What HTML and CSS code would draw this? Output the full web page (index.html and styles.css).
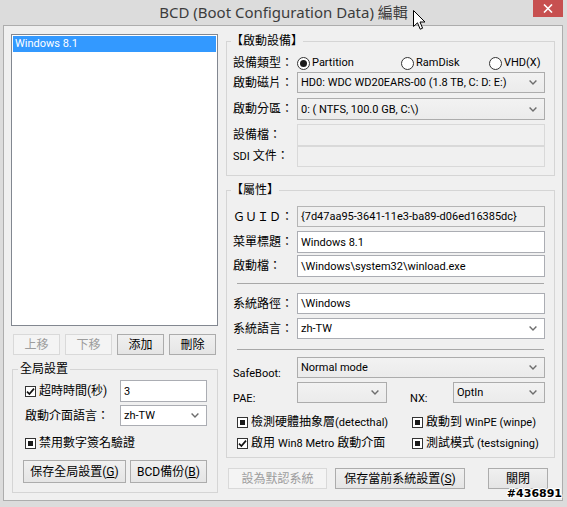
FILE: index.html
```html
<!DOCTYPE html>
<html lang="zh-Hant">
<head>
<meta charset="utf-8">
<title>BCD 編輯</title>
<link rel="stylesheet" href="styles.css">
</head>
<body>
<div class="window">
  <div class="titlebar">
    <div class="title">BCD (Boot Configuration Data) 編輯</div>
    <div class="close"><svg width="10" height="9" viewBox="0 0 10 9"><path d="M1 0.5L9 8.5M9 0.5L1 8.5" stroke="#fff" stroke-width="1.6"/></svg></div>
    <svg class="cursor" width="13" height="20" viewBox="0 0 13 20"><path d="M0.5 0.5 V16.5 L4.5 12.8 L7.2 19.2 L9.6 18.2 L7 12 H12 Z" fill="#fff" stroke="#000" stroke-width="1" stroke-linejoin="round"/></svg>
  </div>
  <div class="client">
    <div class="leftcol">
      <div class="listbox"><div class="item sel">Windows 8.1</div></div>
      <div class="listbtns">
        <div class="btn dis">上移</div>
        <div class="btn dis">下移</div>
        <div class="btn">添加</div>
        <div class="btn">刪除</div>
      </div>
      <fieldset class="group gglobal">
        <legend>全局設置</legend>
        <div class="grow r1">
          <div class="check"><span class="cb"><svg width="9" height="9" viewBox="0 0 9 9"><path d="M1 4.6 L3.4 7 L8 1.6" fill="none" stroke="#111" stroke-width="1.7"/></svg></span><span>超時時間(秒)</span></div>
          <div class="tb w87">3</div>
        </div>
        <div class="grow r2">
          <div class="plain">啟動介面語言：</div>
          <div class="tb combo w87">zh-TW<svg class="chev" width="8" height="5" viewBox="0 0 8 5"><path d="M0.6 0.6 L4 4 L7.4 0.6" fill="none" stroke="#6d6d6d" stroke-width="1.4"/></svg></div>
        </div>
        <div class="grow r3">
          <div class="check"><span class="cb ind"></span><span>禁用數字簽名驗證</span></div>
        </div>
        <div class="grow r4">
          <div class="btn gb1"><span>保存全局設置(<u>G</u>)</span></div>
          <div class="btn gb2"><span>BCD備份(<u>B</u>)</span></div>
        </div>
      </fieldset>
    </div>
    <div class="rightcol">
      <fieldset class="group gboot">
        <legend>【啟動設備】</legend>
        <div class="frow h18">
          <div class="lbl">設備類型：</div>
          <div class="radios">
            <div class="radio"><span class="rb on"></span>Partition</div>
            <div class="radio"><span class="rb"></span>RamDisk</div>
            <div class="radio"><span class="rb"></span>VHD(X)</div>
          </div>
        </div>
        <div class="frow h21">
          <div class="lbl">啟動磁片：</div>
          <div class="tb dd ctl">HD0: WDC WD20EARS-00 (1.8 TB, C: D: E:)<svg class="chev" width="8" height="5" viewBox="0 0 8 5"><path d="M0.6 0.6 L4 4 L7.4 0.6" fill="none" stroke="#6d6d6d" stroke-width="1.4"/></svg></div>
        </div>
        <div class="frow h22 m5">
          <div class="lbl">啟動分區：</div>
          <div class="tb dd ctl">0: ( NTFS, 100.0 GB, C:\)<svg class="chev" width="8" height="5" viewBox="0 0 8 5"><path d="M0.6 0.6 L4 4 L7.4 0.6" fill="none" stroke="#6d6d6d" stroke-width="1.4"/></svg></div>
        </div>
        <div class="frow h22 m4">
          <div class="lbl">設備檔：</div>
          <div class="tb dis ctl"></div>
        </div>
        <div class="frow h21">
          <div class="lbl"><span class="en">SDI</span> 文件：</div>
          <div class="tb dis ctl"></div>
        </div>
      </fieldset>
      <fieldset class="group gattr">
        <legend>【屬性】</legend>
        <div class="frow h21">
          <div class="lbl">ＧＵＩＤ：</div>
          <div class="tb ro ctl">{7d47aa95-3641-11e3-ba89-d06ed16385dc}</div>
        </div>
        <div class="frow h22 m4">
          <div class="lbl">菜單標題：</div>
          <div class="tb ctl">Windows 8.1</div>
        </div>
        <div class="frow h22 m2">
          <div class="lbl">啟動檔：</div>
          <div class="tb ctl">\Windows\system32\winload.exe</div>
        </div>
        <div class="sep s1"></div>
        <div class="frow h21 m9">
          <div class="lbl">系統路徑：</div>
          <div class="tb ctl">\Windows</div>
        </div>
        <div class="frow h21 m4">
          <div class="lbl">系統語言：</div>
          <div class="tb combo ctl">zh-TW<svg class="chev" width="8" height="5" viewBox="0 0 8 5"><path d="M0.6 0.6 L4 4 L7.4 0.6" fill="none" stroke="#6d6d6d" stroke-width="1.4"/></svg></div>
        </div>
        <div class="sep s2"></div>
        <div class="frow h21 m7 low">
          <div class="lbl en">SafeBoot:</div>
          <div class="tb dd ctl">Normal mode<svg class="chev" width="8" height="5" viewBox="0 0 8 5"><path d="M0.6 0.6 L4 4 L7.4 0.6" fill="none" stroke="#6d6d6d" stroke-width="1.4"/></svg></div>
        </div>
        <div class="frow h21 m4 low">
          <div class="lbl en">PAE:</div>
          <div class="tb dd pae"><svg class="chev" width="8" height="5" viewBox="0 0 8 5"><path d="M0.6 0.6 L4 4 L7.4 0.6" fill="none" stroke="#6d6d6d" stroke-width="1.4"/></svg></div>
          <div class="lbl en nx">NX:</div>
          <div class="tb dd nxsel">OptIn<svg class="chev" width="8" height="5" viewBox="0 0 8 5"><path d="M0.6 0.6 L4 4 L7.4 0.6" fill="none" stroke="#6d6d6d" stroke-width="1.4"/></svg></div>
        </div>
        <div class="cbrow m11">
          <div class="check"><span class="cb ind"></span><span>檢測硬體抽象層<span class="en">(detecthal)</span></span></div>
          <div class="check"><span class="cb ind"></span><span>啟動到 <span class="en">WinPE (winpe)</span></span></div>
        </div>
        <div class="cbrow m5">
          <div class="check"><span class="cb"><svg width="9" height="9" viewBox="0 0 9 9"><path d="M1 4.6 L3.4 7 L8 1.6" fill="none" stroke="#111" stroke-width="1.7"/></svg></span><span>啟用 <span class="en">Win8 Metro</span> 啟動介面</span></div>
          <div class="check"><span class="cb ind"></span><span>測試模式 <span class="en">(testsigning)</span></span></div>
        </div>
      </fieldset>
      <div class="bottombtns">
        <div class="btn dis b1">設為默認系統</div>
        <div class="btn b2"><span>保存當前系統設置(<u>S</u>)</span></div>
        <div class="btn b3">關閉</div>
      </div>
    </div>
  </div>
  <div class="wm">#436891</div>
</div>
</body>
</html>
```

FILE: styles.css
```css
* { box-sizing: border-box; }
html, body { margin: 0; padding: 0; }
body {
  font-family: "Roboto", "Noto Sans CJK TC", sans-serif;
  font-size: 12px;
  color: #000;
  background: #dcdcdc;
}
.window {
  position: relative;
  width: 567px;
  height: 507px;
  background: #dcdcdc;
  overflow: hidden;
}
.titlebar { position: relative; height: 25px; }
.title {
  font-family: "Noto Sans", "Noto Sans CJK TC", sans-serif;
  font-size: 15px;
  line-height: 25px;
  text-align: center;
  color: #3c3c3c;
}
.close {
  position: absolute;
  top: 0;
  right: 4px;
  width: 30px;
  height: 17px;
  background: #c75050;
  display: flex;
  align-items: center;
  justify-content: center;
}
.cursor { position: absolute; left: 413px; top: 10px; }

.client {
  margin: 0 4px 0 3px;
  height: 476px;
  border: 1px solid #adadad;
  background: #f0f0f0;
  display: flex;
  gap: 8px;
  padding: 7px 6px 0 7px;
}
.leftcol { width: 207px; flex: none; display: flex; flex-direction: column; }
.rightcol { width: 329px; flex: none; display: flex; flex-direction: column; }

.listbox {
  margin-top: 1px;
  height: 292px;
  border: 1px solid #828790;
  background: #fff;
  padding: 1px;
}
.item { height: 16px; line-height: 16px; padding-left: 2px; font-size: 11px; }
.item.sel { background: #3399ff; color: #fff; }

.btn {
  height: 21px;
  border: 1px solid #acacac;
  background: linear-gradient(#f0f0f0, #e5e5e5);
  display: flex;
  align-items: center;
  justify-content: center;
  line-height: 14px;
  white-space: nowrap;
}
.btn.dis { border-color: #d9d9d9; background: #f4f4f4; color: #9d9d9d; }
.btn u { text-underline-offset: 1px; }
.listbtns { margin-top: 8px; display: flex; gap: 5px; padding-left: 2px; }
.listbtns .btn { width: 47px; }

fieldset.group {
  margin: 0;
  padding: 0;
  border: 1px solid #d5d5d5;
  min-width: 0;
}
fieldset.group legend { padding: 0; font-size: 12px; line-height: 16px; }

fieldset.gglobal { margin: 6px 0 0 1px; width: 206px; padding: 3px 10px 9px 12px; }
fieldset.gglobal legend { padding: 0 2px; margin-left: -7px; }
.grow { display: flex; align-items: center; justify-content: space-between; }
.r1 { height: 22px; }
.r2 { height: 21px; margin-top: 3px; }
.r3 { height: 16px; margin-top: 9px; }
.r4 { height: 23px; margin-top: 9px; justify-content: flex-start; gap: 4px; margin-left: -2px; }
.r4 .btn { height: 23px; }
.gb1 { width: 103px; }
.gb2 { width: 77px; }
.w87 { width: 87px; height: 100%; }
.plain { line-height: 16px; }

.check { display: flex; align-items: center; line-height: 16px; white-space: nowrap; }
.cb {
  width: 11px;
  height: 11px;
  border: 1px solid #333;
  background: #fff;
  margin-right: 3px;
  display: flex;
  align-items: center;
  justify-content: center;
  flex: none;
}
.cb.ind::after { content: ""; width: 5px; height: 5px; background: #1a1a1a; }
.en { font-size: 11px; }

fieldset.gboot { padding: 5px 8px 8px 6px; }
fieldset.gboot legend, fieldset.gattr legend { margin-left: -2px; }
fieldset.gattr { margin-top: 6px; padding: 8px 8px 6px 6px; }

.frow { display: flex; align-items: center; }
.h18 { height: 18px; }
.h21 { height: 21px; }
.h22 { height: 22px; }
.m2 { margin-top: 2px; }
.m4 { margin-top: 4px; }
.m5 { margin-top: 5px; }
.m7 { margin-top: 7px; }
.m9 { margin-top: 9px; }
.m11 { margin-top: 11px; }
.lbl { width: 64px; flex: none; white-space: nowrap; line-height: 16px; }
.ctl { width: 248px; }
.low { align-items: flex-end; }
.low .lbl { margin-bottom: -3px; line-height: 14px; }
.low .nx { width: 43px; margin-left: 23px; }
.pae { width: 90px; }
.nxsel { width: 92px; }

.radios { display: grid; grid-template-columns: 104px 88px auto; }
.radio { display: flex; align-items: center; font-size: 11px; line-height: 16px; }
.rb {
  width: 13px;
  height: 13px;
  border: 1px solid #333;
  border-radius: 50%;
  background: #fff;
  margin-right: 2px;
  display: flex;
  align-items: center;
  justify-content: center;
  flex: none;
}
.rb.on::after { content: ""; width: 7px; height: 7px; border-radius: 50%; background: #1a1a1a; }

.tb {
  height: 100%;
  border: 1px solid #abadb3;
  background: #fff;
  font-size: 11px;
  padding: 0 7px 0 3px;
  display: flex;
  align-items: center;
  justify-content: space-between;
  white-space: nowrap;
  overflow: hidden;
}
.tb.ro { background: #f0f0f0; border-color: #b5b5b5; }
.tb.dis { background: #f0f0f0; border-color: #d9d9d9; }
.tb.dd { background: linear-gradient(#f2f2f2, #ebebeb); border-color: #acacac; }
.pae { justify-content: flex-end; }
.chev { flex: none; }

.sep { height: 1px; background: #a8a8a8; margin: 0 2px 0 4px; }
.s1 { margin-top: 6px; }
.s2 { margin-top: 10px; }

.cbrow {
  display: grid;
  grid-template-columns: 175px auto;
  height: 16px;
  align-items: center;
  padding-left: 4px;
}
.m5.cbrow { margin-top: 5px; }

.bottombtns { display: flex; margin-top: 10px; padding-left: 2px; }
.bottombtns .btn { height: 21px; }
.b1 { width: 99px; }
.b2 { width: 130px; margin-left: 8px; }
.b3 { width: 60px; margin-left: 23px; }

.wm {
  position: absolute;
  right: 5px;
  bottom: 7px;
  font-family: "DejaVu Sans", sans-serif;
  font-weight: bold;
  font-size: 11px;
  line-height: 12px;
  color: #000;
  text-shadow: 1px 0 0 #fff, -1px 0 0 #fff, 0 1px 0 #fff, 0 -1px 0 #fff, 1px 1px 0 #fff, -1px -1px 0 #fff, 1px -1px 0 #fff, -1px 1px 0 #fff;
}
```
